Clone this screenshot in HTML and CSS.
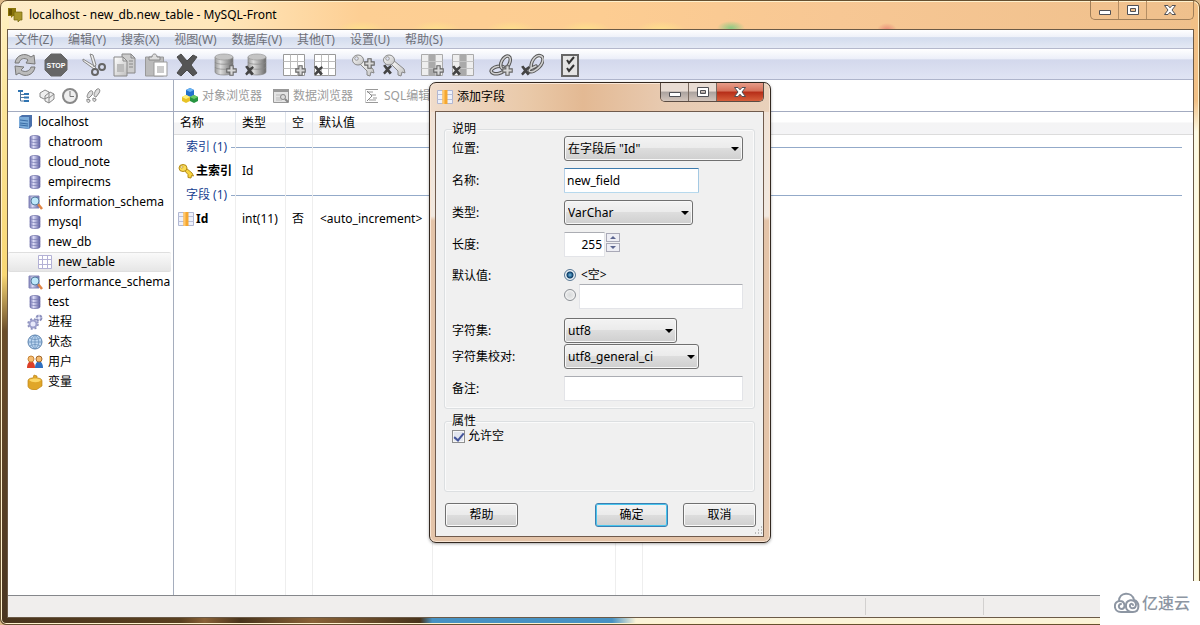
FILE: index.html
```html
<!DOCTYPE html>
<html lang="zh-CN">
<head>
<meta charset="utf-8">
<title>localhost - new_db.new_table - MySQL-Front</title>
<link rel="stylesheet" href="styles.css">
</head>
<body>
<svg class="defs" aria-hidden="true">
  <defs>
    <linearGradient id="metal" x1="0" y1="0" x2="1" y2="0"><stop offset="0" stop-color="#999"/><stop offset=".3" stop-color="#ddd"/><stop offset="1" stop-color="#6a6a6a"/></linearGradient>
    <linearGradient id="blue" x1="0" y1="0" x2="1" y2="0"><stop offset="0" stop-color="#7577b4"/><stop offset=".35" stop-color="#dcdcf6"/><stop offset="1" stop-color="#5d5f9f"/></linearGradient>
    <linearGradient id="paper" x1="0" y1="0" x2="1" y2="1"><stop offset="0" stop-color="#fff"/><stop offset="1" stop-color="#c0c0c0"/></linearGradient>
    <symbol id="plus" viewBox="0 0 10 10"><path d="M3.5 .7h3v2.8h2.8v3H6.500v2.800h-3V6.500H.7v-3h2.800z" fill="#d8d8d8" stroke="#666"/></symbol>
    <symbol id="cross" viewBox="0 0 10 10"><path d="M1 1.500 3 .5l2 2.500L8 1l1 1.500L6.500 5 9 8 7 9.500 5 7 2.500 9.500 1 8l2.500-3z" fill="#444"/></symbol>
    <symbol id="db" viewBox="0 0 24 24"><path d="M2 4v15c0 4 18 4 18 0V4z" fill="url(#metal)" stroke="#888" stroke-width=".7"/><ellipse cx="11" cy="4" rx="9" ry="3" fill="#c4c4c4" stroke="#999" stroke-width=".7"/><path d="M2 9c0 3 18 3 18 0M2 14c0 3 18 3 18 0" fill="none" stroke="#888" stroke-width=".7"/></symbol>
    <symbol id="grid" viewBox="0 0 24 24"><path d="M1.500 1.500h21v21h-21z" fill="#fff" stroke="#999"/><path d="M8.500 1.500v21M15.500 1.500v21M1.500 8.500h21M1.500 15.500h21" stroke="#bbb"/></symbol>
    <symbol id="gridcol" viewBox="0 0 24 24"><path d="M1.500 1.500h21v21h-21z" fill="#eee" stroke="#aaa"/><path d="M8 2h8v20H8z" fill="#aaa"/><path d="M8.500 1.500v21M15.500 1.500v21M1.500 8.500h21M1.500 15.500h21" stroke="#c4c4c4"/></symbol>
    <symbol id="key" viewBox="0 0 24 24"><path d="m8 10 3-3 11 9 1 4-3-1-1 4-3-1v-4z" fill="url(#paper)" stroke="#888"/><ellipse cx="7" cy="7" rx="5.500" ry="5" fill="url(#paper)" stroke="#888"/><circle cx="5.500" cy="5.500" r="1.800" fill="#dfe3f2" stroke="#999"/></symbol>
    <symbol id="link" viewBox="0 0 24 24"><g fill="none"><ellipse cx="9" cy="17" rx="7" ry="3.500" transform="rotate(-12 9 17)" stroke="#555" stroke-width="3.500"/><ellipse cx="9" cy="17" rx="7" ry="3.500" transform="rotate(-12 9 17)" stroke="#d0d0d0" stroke-width="1.500"/><ellipse cx="16.500" cy="9.500" rx="4" ry="7" transform="rotate(28 16.500 9.500)" stroke="#555" stroke-width="3.500"/><ellipse cx="16.500" cy="9.500" rx="4" ry="7" transform="rotate(28 16.500 9.500)" stroke="#d0d0d0" stroke-width="1.500"/></g></symbol>
    <symbol id="unlink" viewBox="0 0 24 24"><g fill="none" stroke-linecap="round"><path d="M11 15C11 6 17 1 21 3s2 10-7 15c-4 2-6 0-4-2l6-3" stroke="#555" stroke-width="3.500"/><path d="M11 15C11 6 17 1 21 3s2 10-7 15c-4 2-6 0-4-2l6-3" stroke="#d0d0d0" stroke-width="1.500"/></g></symbol>
    <symbol id="smalldb" viewBox="0 0 16 16"><path d="M3 3v10c0 2 10 2 10 0V3c0-2-10-2-10 0z" fill="url(#blue)" stroke="#6a6ca6" stroke-width=".7"/><path d="M3 4c0 2 10 2 10 0M3 7c0 2 10 2 10 0M3 10c0 2 10 2 10 0" fill="none" stroke="#777ab2" stroke-width=".7"/></symbol>
    <symbol id="schema" viewBox="0 0 16 16"><path d="M2 2h10v12H2z" fill="url(#blue)" stroke="#8587b8"/><path d="m11 10 4 5" stroke="#e08646" stroke-width="2.500"/><circle cx="8" cy="7" r="4" fill="#bde8fa" stroke="#557b9d"/></symbol>
    <symbol id="fieldicon" viewBox="0 0 16 16"><path d="M.5 1.500h15v13H.5z" fill="#eef1fb" stroke="#b1b7d2"/><path d="M.5 5.500h15M.5 10.500h15" stroke="#b9bfd9"/><path d="M5.500 1h5v14h-5z" fill="#f5a730"/><path d="M5.500 1h2v14h-2z" fill="#ffc76c"/></symbol>
    <symbol id="min" viewBox="0 0 14 12"><path d="M1.500 6.500h11v4h-11z" fill="#fff" stroke="#505055"/></symbol>
    <symbol id="max" viewBox="0 0 14 12"><path fill-rule="evenodd" d="M1.500 1.500h11v9h-11zm3 3v3h5v-3z" fill="#fff" stroke="#505055"/></symbol>
    <symbol id="close" viewBox="0 0 14 12"><path d="M1.500 1.500H5l2 2.300 2-2.300h3.500L9 6l3.500 4.500H9L7 8.200 5 10.500H1.500L5 6z" fill="#fff" stroke="#505055"/></symbol>
  </defs>
</svg>

<div class="window">
  <header class="titlebar">
    <svg class="i16" viewBox="0 0 16 16"><path d="M1 1h8v8H6L4 11V9H1z" fill="#8a7509"/><path d="M7 5h8v8h-2l-2 2v-2H7z" fill="#a8952a" stroke="#74650d" stroke-width=".7"/><path d="M2 2h3v6H2z" fill="#675300"/></svg>
    <h1>localhost - new_db.new_table - MySQL-Front</h1>
    <div class="winbtns">
      <button aria-label="最小化"><svg><use href="#min"/></svg></button><button aria-label="还原"><svg><use href="#max"/></svg></button><button class="x" aria-label="关闭"><svg><use href="#close"/></svg></button>
    </div>
  </header>

  <div class="client">
    <nav class="menu"><button>文件(Z)</button><button>编辑(Y)</button><button>搜索(X)</button><button>视图(W)</button><button>数据库(V)</button><button>其他(T)</button><button>设置(U)</button><button>帮助(S)</button></nav>

    <div class="toolbar">
      <div class="set">
        <button aria-label="刷新"><svg viewBox="0 0 24 24"><path d="M2 10C3 2 12-1 18 4l3-2 1 9-9-1 2-3c-4-3-8-1-9 3zM22 14c-1 8-10 11-16 6l-3 2-1-9 9 1-3 3c4 3 9 1 10-3z" fill="#bbb" stroke="#777"/></svg></button>
        <button aria-label="停止"><svg viewBox="0 0 24 24"><path d="M7 1h10l6 6v10l-6 6H7l-6-6V7z" fill="#666" stroke="#666"/><text x="12" y="15" class="stop">STOP</text></svg></button>
      </div>
      <div class="set">
        <button aria-label="剪切"><svg viewBox="0 0 24 24"><path d="M1 6 14 14l-2 2L1 8zM8 1l4 13 2-2-3-10z" fill="#eee" stroke="#888"/><circle cx="13" cy="19" r="3" fill="none" stroke="#666" stroke-width="2"/><circle cx="20" cy="14" r="3" fill="none" stroke="#666" stroke-width="2"/></svg></button>
        <button aria-label="复制"><svg viewBox="0 0 24 24"><path d="M9 1h9l4 4v15H9z" fill="#ccc" stroke="#888"/><path d="M1 4h9l4 4v15H1z" fill="url(#paper)" stroke="#888"/><path d="M10 4v4h4M18 1v4h4M16 8h4M16 11h4M16 14h4" fill="none" stroke="#888"/><path d="M4 11h7v8H4z" fill="#bbb"/></svg></button>
        <button aria-label="粘贴"><svg viewBox="0 0 24 24"><path d="M1.500 4h18v19h-18z" fill="#bbb" stroke="#999"/><path d="M5 7V4h3c0-4 5-4 5 0h3v3z" fill="#ddd" stroke="#888"/><path d="M10 9h13v14H10z" fill="#fff" stroke="#999"/><path d="M13 13h7v7h-7z" fill="#ccc"/></svg></button>
        <button aria-label="删除"><svg viewBox="0 0 24 24"><path d="m2 4 4-3 6 7 6-6 4 2-6 8 6 8-4 3-6-6-6 6-4-3 6-8z" fill="#555" stroke="#4a4a4a"/></svg></button>
      </div>
      <div class="set">
        <button aria-label="新建数据库"><svg viewBox="0 0 24 24"><use href="#db"/><use href="#plus" x="13" y="12" width="11" height="11"/></svg></button>
        <button aria-label="删除数据库"><svg viewBox="0 0 24 24"><use href="#db" x="2"/><use href="#cross" x="0" y="12" width="11" height="11"/></svg></button>
      </div>
      <div class="set">
        <button aria-label="新建表"><svg viewBox="0 0 24 24"><use href="#grid"/><use href="#plus" x="13" y="12" width="11" height="11"/></svg></button>
        <button aria-label="删除表"><svg viewBox="0 0 24 24"><use href="#grid"/><use href="#cross" x="0" y="12" width="11" height="11"/></svg></button>
      </div>
      <div class="set">
        <button aria-label="新建索引"><svg viewBox="0 0 24 24"><use href="#key"/><use href="#plus" x="13" y="5" width="11" height="11"/></svg></button>
        <button aria-label="删除索引"><svg viewBox="0 0 24 24"><use href="#key"/><use href="#cross" x="0" y="11" width="11" height="11"/></svg></button>
      </div>
      <div class="set">
        <button aria-label="新建字段"><svg viewBox="0 0 24 24"><use href="#gridcol"/><use href="#plus" x="13" y="12" width="11" height="11"/></svg></button>
        <button aria-label="删除字段"><svg viewBox="0 0 24 24"><use href="#gridcol"/><use href="#cross" x="0" y="12" width="11" height="11"/></svg></button>
      </div>
      <div class="set">
        <button aria-label="新建外键"><svg viewBox="0 0 24 24"><use href="#link"/><use href="#plus" x="13" y="12" width="11" height="11"/></svg></button>
        <button aria-label="删除外键"><svg viewBox="0 0 24 24"><use href="#unlink"/><use href="#cross" x="0" y="12" width="11" height="11"/></svg></button>
      </div>
      <div class="set">
        <button aria-label="提交"><svg viewBox="0 0 24 24"><path d="M4 2h16v21H4z" fill="#e4e4e4" stroke="#666" stroke-width="2"/><path d="m9 7 2 3 5-6M9 15l2 3 5-6" fill="none" stroke="#333" stroke-width="2"/></svg></button>
      </div>
    </div>

    <div class="panes">
      <aside class="side">
        <div class="sidebar-tools">
          <button aria-label="导航"><svg class="i16" viewBox="0 0 16 16"><path d="M4.500 4v9M4.500 6.500H8M4.500 9.500H8M4.500 13H8" stroke="#55779b" fill="none"/><path d="M2 2h5v2H2zM8 5h5v2H8zM8 8.500h5v2H8zM8 12h5v2H8z" fill="#2f74b2"/></svg></button>
          <button aria-label="书签"><svg class="i16" viewBox="0 0 16 16"><path d="m1 5 5-3 4 2v5l-5 2-4-2zM6 8l5-4 4 2v5l-5 4-4-2zM10 10v5M10 10l5-4" fill="#eee" stroke="#888"/></svg></button>
          <button aria-label="历史"><svg class="i16" viewBox="0 0 16 16"><circle cx="8" cy="8" r="7" fill="#eee" stroke="#888" stroke-width="2"/><path d="M8 3v5.500h4" fill="none" stroke="#777"/></svg></button>
          <button aria-label="日志"><svg class="i16" viewBox="0 0 16 16"><path d="M4 4c3-3 5 0 3 3l-3 3c-3 0-2-3 0-6zM2 11l3 1c0 4-4 3-3-1zM11 2c3-3 5 0 3 3l-3 4c-3 0-2-4 0-7zM8 10l3 1c0 4-4 3-3-1z" fill="#ddd" stroke="#888"/></svg></button>
        </div>
        <ul class="tree">
          <li class="root"><svg class="i16" viewBox="0 0 16 16"><path d="m2 3 3-2h10v11l-3 3-10-1z" fill="#4a70ab"/><path d="M2 3h10v12L2 13z" fill="#7aaad9"/><path d="m3 6 8 1M3 9l8 1M3 11l8 1" stroke="#396ca5"/></svg>localhost</li>
          <li><svg class="i16"><use href="#smalldb"/></svg>chatroom</li>
          <li><svg class="i16"><use href="#smalldb"/></svg>cloud_note</li>
          <li><svg class="i16"><use href="#smalldb"/></svg>empirecms</li>
          <li><svg class="i16"><use href="#schema"/></svg>information_schema</li>
          <li><svg class="i16"><use href="#smalldb"/></svg>mysql</li>
          <li><svg class="i16"><use href="#smalldb"/></svg>new_db</li>
          <li class="leaf"><svg class="i16" viewBox="0 0 16 16"><path d="M1.500 1.500h13v13h-13zM5.500 2v12M10.500 2v12M2 5.500h12M2 10.500h12" fill="#fff" stroke="#b3b1d5"/></svg>new_table</li>
          <li><svg class="i16"><use href="#schema"/></svg>performance_schema</li>
          <li><svg class="i16"><use href="#smalldb"/></svg>test</li>
          <li><svg class="i16" viewBox="0 0 16 16"><circle cx="6" cy="10" r="3.500" fill="#e7e9fa" stroke="#9c9fcb" stroke-width="2"/><circle cx="6" cy="10" r="5" fill="none" stroke="#8c90bd" stroke-width="1.500" stroke-dasharray="2 2"/><circle cx="12" cy="4" r="2.500" fill="#e7e9fa" stroke="#8c90bd" stroke-width="2" stroke-dasharray="3 1"/></svg>进程</li>
          <li><svg class="i16" viewBox="0 0 16 16"><circle cx="8" cy="8" r="7" fill="#bcd6f0" stroke="#5a80ac"/><path d="M1 8h14M8 1v14M3 4c3 2 7 2 10 0M3 12c3-2 7-2 10 0M8 1C3 5 3 11 8 15M8 1c5 4 5 10 0 14" fill="none" stroke="#6b92bc" stroke-width=".8"/></svg>状态</li>
          <li><svg class="i16" viewBox="0 0 16 16"><path d="M0 14c0-9 8-9 8 0z" fill="#dc3f28"/><path d="M8 14c0-9 8-9 8 0z" fill="#2d6fc0"/><circle cx="4" cy="5" r="3" fill="#f5bd73" stroke="#c78435"/><circle cx="12" cy="5" r="3" fill="#f5bd73" stroke="#a2662a"/></svg>用户</li>
          <li><svg class="i16" viewBox="0 0 16 16"><path d="M1 7c0-3 4-3 5-3l1-3 3 1v2c3 0 5 1 5 3v5l-6 4c-5 0-8-2-8-4z" fill="#e0a628" stroke="#bd8419" stroke-width=".7"/><path d="M2 6c3-2 10-2 12 0-2 3-9 3-12 0z" fill="#fbd766"/></svg>变量</li>
        </ul>
      </aside>

      <main class="main">
        <div class="tabs">
          <button><svg class="i16" viewBox="0 0 16 16"><path d="m4 2 4-2 4 2v5L8 9 4 7z" fill="#2371cc"/><path d="m0 9 4-2 4 2v4l-4 2-4-2z" fill="#e8c326"/><path d="m8 9 4-2 4 2v4l-4 2-4-2z" fill="#269440"/><path d="m4 2 4-2 4 2-4 2z" fill="#6cb5f3"/><path d="m0 9 4-2 4 2-4 2z" fill="#fff17c"/><path d="m8 9 4-2 4 2-4 2z" fill="#69cb65"/></svg>对象浏览器</button>
          <button><svg class="i16" viewBox="0 0 16 16"><path d="M.5 1.500h15v13H.5z" fill="#e4e4e4" stroke="#999"/><path d="M0 1h16v3H0z" fill="#999"/><path d="M3 7h9M3 10h9M3 12h6" stroke="#bbb"/><circle cx="10" cy="9" r="2.500" fill="#ddd" stroke="#888"/><path d="m12 11 3 3" stroke="#888" stroke-width="2"/></svg>数据浏览器</button>
          <button><svg class="i16" viewBox="0 0 16 16"><path d="M2 1.500h12M2 14.500h12M3 4h6M7 7h5M9 10h4M5 12h7" stroke="#999"/><path d="m3 3 5 5-5 5" fill="none" stroke="#888"/><path d="M1.500 1v14" stroke="#ccc"/></svg>SQL编辑器</button>
        </div>
        <table class="list">
          <colgroup><col class="c-name"><col class="c-type"><col class="c-null"><col class="c-default"><col class="c-extra"><col class="c-flag"><col><col class="c-end"></colgroup>
          <thead><tr><th>名称</th><th>类型</th><th>空</th><th>默认值</th><th></th><th></th><th></th><th></th></tr></thead>
          <tbody>
            <tr class="group"><td><span class="group-label">索引 (1)</span></td><td></td><td></td><td></td><td></td><td></td><td></td><td></td></tr>
            <tr><td><b class="name"><svg class="i16" viewBox="0 0 16 16"><path d="m6 7 2-2 6 5 1.500 3-2-.5-.5 2.500-3-.5v-3z" fill="#f8d43e" stroke="#b38a14"/><ellipse cx="5" cy="5" rx="4" ry="3.500" fill="#fbdc55" stroke="#b38a14"/><circle cx="3.800" cy="4" r="1.200" fill="#fff" stroke="#b38a14" stroke-width=".7"/></svg>主索引</b></td><td>Id</td><td></td><td></td><td></td><td></td><td></td><td></td></tr>
            <tr class="group"><td><span class="group-label">字段 (1)</span></td><td></td><td></td><td></td><td></td><td></td><td></td><td></td></tr>
            <tr><td><b class="name"><svg class="i16"><use href="#fieldicon"/></svg>Id</b></td><td>int(11)</td><td>否</td><td>&lt;auto_increment&gt;</td><td></td><td></td><td></td><td></td></tr>
            <tr class="fill"><td></td><td></td><td></td><td></td><td></td><td></td><td></td><td></td></tr>
          </tbody>
        </table>
      </main>
    </div>
    <footer class="status"><span></span><span></span><span></span></footer>
  </div>
</div>

<form class="dialog" role="dialog" aria-labelledby="dlg-title">
  <header class="dlg-title">
    <svg class="i16"><use href="#fieldicon"/></svg><h2 id="dlg-title">添加字段</h2>
    <div class="winbtns solid">
      <button type="button" aria-label="最小化"><svg><use href="#min"/></svg></button><button type="button" aria-label="最大化"><svg><use href="#max"/></svg></button><button type="button" class="x" aria-label="关闭"><svg><use href="#close"/></svg></button>
    </div>
  </header>
  <div class="dlg-body">
    <fieldset>
      <legend>说明</legend>
      <div class="row"><label for="pos">位置:</label><span class="select w-full"><select id="pos"><option>在字段后 "Id"</option></select></span></div>
      <div class="row"><label for="name">名称:</label><input class="w-mid focused" id="name" type="text" value="new_field"></div>
      <div class="row"><label for="type">类型:</label><span class="select w-type"><select id="type"><option>VarChar</option></select></span></div>
      <div class="row"><label for="len">长度:</label><input class="w-num" id="len" type="text" value="255"><span class="spin"><button type="button" aria-label="增加"></button><button type="button" class="down" aria-label="减少"></button></span></div>
      <div class="row default"><span class="caption">默认值:</span>
        <div class="choices w-full">
          <label class="choice"><input type="radio" name="def" checked>&lt;空&gt;</label>
          <div class="choice"><input type="radio" name="def" aria-label="默认值文本"><input type="text" aria-label="默认值"></div>
        </div>
      </div>
      <div class="row"><label for="cs">字符集:</label><span class="select w-cs"><select id="cs"><option>utf8</option></select></span></div>
      <div class="row tight"><label for="co">字符集校对:</label><span class="select w-mid"><select id="co"><option>utf8_general_ci</option></select></span></div>
      <div class="row"><label for="memo">备注:</label><input class="w-full" id="memo" type="text"></div>
    </fieldset>
    <fieldset class="attrs">
      <legend>属性</legend>
      <label class="check"><input type="checkbox" checked>允许空</label>
    </fieldset>
    <div class="actions"><button type="button">帮助</button><button type="submit" class="primary">确定</button><button type="button">取消</button></div>
    <svg class="grip" viewBox="0 0 10 10" aria-hidden="true"><path d="M8 1h1M5 4h1M8 4h1M2 7h1M5 7h1M8 7h1" stroke="#bbb" stroke-width="2"/></svg>
  </div>
</form>

<div class="brand">
  <svg viewBox="0 0 26 22" aria-hidden="true"><g fill="none" stroke="#8d96a3" stroke-width="2" stroke-linecap="round"><path d="M5 9C5 0 18-1 20 8c6 2 6 12-1 12H7C-1 20-1 9 6 9c5 0 6 7 2 8-4 0-4-5-1-5"/><path d="M12 15c-1-8 9-9 10-3 0 6-7 5-6 1 1-2 3-1 3 0M12 15c0 3 3 5 6 5"/></g></svg>
  <span>亿速云</span>
</div>
</body>
</html>
```
FILE: styles.css
```css
* { box-sizing: border-box; }
body {
  margin: 0;
  position: relative;
  background: #dcb988;
  color: #000;
  font: 12px/16px "Noto Sans", "Noto Sans CJK SC", sans-serif;
}
button, input, select { font: inherit; color: inherit; margin: 0; }
button { padding: 0; border: 0; background: none; }
h1, h2 { margin: 0; font: inherit; }
.defs { position: absolute; width: 0; height: 0; }
.i16 { width: 16px; height: 16px; flex: none; }

/* Main window and its glass frame */
.window {
  display: flex;
  flex-direction: column;
  min-height: 100vh;
  padding: 0 5px 6px 6px;
  border: 1px solid #665030;
  border-radius: 7px 7px 6px 6px;
  box-shadow: inset 0 0 0 1px #fff1cd;
  background:
    radial-gradient(closest-side, #8ccb83, transparent) 716px 20px / 28px 14px no-repeat,
    radial-gradient(closest-side, #e98a76, transparent) 876px 22px / 20px 14px no-repeat,
    radial-gradient(closest-side, #ffe08c, transparent) 335px 20px / 50px 18px no-repeat,
    radial-gradient(closest-side, #ffe08c, transparent) 410px 20px / 50px 18px no-repeat,
    radial-gradient(closest-side, #ffe08c, transparent) 485px 20px / 50px 18px no-repeat,
    radial-gradient(closest-side, #ffe08c, transparent) 560px 20px / 50px 18px no-repeat,
    radial-gradient(closest-side, #ffe08c, transparent) 635px 20px / 50px 18px no-repeat,
    linear-gradient(90deg, #4a351e 0, #5a4020 15%, #8a6238 17%, #49341c 20%, #8a6238 26%, #49341c 35%, #4791c2 36%, #4791c2 51%, #fbf3d8 53%) bottom / 100% 8px no-repeat,
    linear-gradient(180deg, #fff1c5 0, #fbe59a 16%, #f8d774 44%, #6a4d2a 53%, #493521 100%) left / 8px 100% no-repeat,
    linear-gradient(180deg, #f1c086 0, #f1c086 16%, #fcfae4 21%, #fcf9e0 100%) right / 8px 100% no-repeat,
    linear-gradient(90deg, #fdebc8 0, #ffe7bb 18%, #fdcf94 30%, #fdcd92 50%, #f7c794 70%, #efc08c 100%);
}
.titlebar { display: flex; align-items: center; height: 28px; gap: 6px; }
.titlebar h1 { flex: 1; }
.winbtns { display: flex; align-self: flex-start; height: 19px; border: 1px solid #a17f59; border-top: 0; border-radius: 0 0 5px 5px; overflow: hidden; }
.winbtns button { width: 28px; display: flex; align-items: center; justify-content: center; border-right: 1px solid #b48e64; }
.winbtns .x { width: 46px; border-right: 0; }
.winbtns svg { width: 14px; height: 12px; }
.client { flex: 1; display: flex; flex-direction: column; border: 1px solid #6b5a47; background: #fff; }

.menu { display: flex; gap: 15px; height: 19px; padding: 2px 7px 0; border-bottom: 1px solid #b5b9cc; background: linear-gradient(#fff 0, #eef1f9 40%, #d3dcee 42%, #e4e9f4 100%); }
.menu button { color: #6e7078; }
.toolbar { display: flex; gap: 14px; height: 31px; padding: 4px 5px 2px; border-bottom: 1px solid #aeb4cb; background: linear-gradient(#fff 0, #eceff9 33%, #d3d8ec 36%, #e0e4f4 100%); }
.set { display: flex; gap: 7px; }
.set button, .set svg { width: 24px; height: 24px; display: block; }
.stop { font: bold 7px "Liberation Sans", sans-serif; fill: #fff; text-anchor: middle; }

.panes { flex: 1; display: flex; }
.side { width: 166px; display: flex; flex-direction: column; border-right: 1px solid #a5adbd; }
.sidebar-tools { height: 32px; display: flex; align-items: center; gap: 7px; padding: 0 8px; border-bottom: 1px solid #a3abc0; margin-right: -1px; }
.sidebar-tools svg { display: block; }
.tree { list-style: none; margin: 0; padding: 0 2px 0 0; }
.tree li { display: flex; align-items: center; gap: 5px; height: 20px; padding-left: 19px; overflow: hidden; white-space: nowrap; }
.tree .root { padding-left: 9px; }
.tree .leaf { padding-left: 29px; background: linear-gradient(#fafafa, #e6e6e6); border: 1px solid #dfdfdf; border-width: 1px 0; border-radius: 2px; }

.main { flex: 1; min-width: 0; display: flex; flex-direction: column; }
.tabs { height: 32px; display: flex; align-items: center; gap: 11px; padding: 0 8px; border-bottom: 1px solid #a3abc0; }
.tabs button { display: flex; align-items: center; gap: 4px; color: #9b9b9b; }
.list { flex: 1; width: 100%; display: table; table-layout: fixed; border-collapse: separate; border-spacing: 0; height: 100%; }
.c-name { width: 62px; } .c-type { width: 50px; } .c-null { width: 27px; } .c-default { width: 120px; }
.c-extra { width: 183px; } .c-flag { width: 27px; } .c-end { width: 11px; }
.list th { height: 23px; padding: 0 6px; font-weight: normal; text-align: left; background: linear-gradient(#fff 45%, #f4f4f5 50%, #f4f4f6); border-right: 1px solid #e0e4ea; border-bottom: 1px solid #dcdcdc; }
.list td { height: 24px; padding: 0 6px; border-right: 1px solid #eee; white-space: nowrap; }
.list td:nth-child(4) { padding-left: 7px; }
.list th:nth-child(n+7), .list td:nth-child(n+7) { border-right: 0; }
.list td:first-child { padding: 0 0 0 4px; }
.list .group td { background: linear-gradient(#93aac9, #93aac9) center / 100% 1px no-repeat; }
.list .group td:first-child, .list .group td:last-child { background: none; }
.group-label { display: flex; align-items: center; gap: 4px; padding-left: 8px; color: #173f91; }
.group-label::after { content: ""; flex: 1; height: 1px; background: #93aac9; }
.list .fill td { height: auto; }
.name { display: flex; align-items: center; gap: 2px; }
.status { height: 22px; display: flex; padding: 2px 0; background: #f0eeed; border-top: 1px solid #85878b; }
.status span { flex: 1; border-right: 1px solid #d2d0cf; }
.status span:nth-child(2) { flex: 0 0 118px; }
.status span:nth-child(3) { flex: 0 0 209px; border: 0; }

/* Field dialog floating over the main window */
.dialog {
  position: absolute;
  top: 82px;
  left: 50%;
  transform: translateX(-50%);
  width: 342px;
  padding: 0 6px 5px 5px;
  border: 1px solid #332820;
  border-radius: 7px;
  box-shadow: inset 0 0 0 1px #f9e6d5, 0 1px 3px rgba(0, 0, 0, .35);
  background: linear-gradient(90deg, #f0dccb 0, #e9c8a7 30%, #e3b993 45%, #e8cbb2 70%, #e9d1bb 100%) top / 100% 29px no-repeat, linear-gradient(#f0e1d4 0, #f1e8df 29%, #e4c4a9 30%, #e4c4a9 100%);
}
.dlg-title { display: flex; align-items: center; gap: 4px; height: 28px; padding-left: 2px; }
.dlg-title h2 { flex: 1; }
.winbtns.solid { border-color: #5b4c43; }
.solid button { background: linear-gradient(#e8dcd3 45%, #aaa29e 50%, #d3c5bc); border-color: #77685e; }
.solid .x { background: linear-gradient(#e79d89 0, #d57059 45%, #b62d18 50%, #d65f3b 100%); }
.dlg-body { position: relative; padding: 10px 8px 9px; border: 1px solid #705b4d; background: #f0f0f0; }
fieldset { margin: 0; padding: 0 10px 7px 7px; border: 1px solid #dcdfe1; border-radius: 3px; box-shadow: inset 0 0 0 1px #fafafa; min-width: 0; }
legend { padding: 0; line-height: 14px; }
.row { display: flex; align-items: center; height: 25px; margin-bottom: 7px; }
.row:last-child { margin-bottom: 0; }
.row > label, .caption { width: 112px; flex: none; }
.w-full { width: 179px; } .w-mid { width: 135px; } .w-type { width: 129px; } .w-cs { width: 113px; } .w-num { width: 41px; text-align: right; }
.select { position: relative; display: block; height: 25px; }
.select::after { content: ""; position: absolute; right: 4px; top: 11px; border: 4px solid transparent; border-top-color: #000; border-bottom: 0; pointer-events: none; }
select { appearance: none; width: 100%; height: 25px; padding: 0 16px 0 3px; border: 1px solid #707070; border-radius: 3px; background: linear-gradient(#f3f3f3 0, #ebebeb 48%, #dddddd 50%, #cfcfcf 100%); box-shadow: inset 0 0 0 1px #f8f8f8; }
input[type="text"] { height: 25px; padding: 0 2px; border: 1px solid #e3e4e8; border-top-color: #abadb3; border-radius: 1px; background: #fff; }
input.focused { border-color: #3d7bad #a4c9e3 #b7d9ed #b5cfe7; }
.spin { display: flex; flex-direction: column; gap: 1px; margin-left: 1px; align-self: flex-start; padding-top: 1px; }
.spin button { width: 14px; height: 9px; display: flex; align-items: center; justify-content: center; border: 1px solid #a9a9b7; background: #eeeef4; }
.spin button::before { content: ""; border: 3px solid transparent; border-bottom-color: #5d6690; border-top: 0; }
.spin .down::before { border: 3px solid transparent; border-top-color: #5d6690; border-bottom: 0; }
.default { height: auto; align-items: flex-start; padding-top: 2px; margin-bottom: 9px; }
.caption { line-height: 20px; }
.choice { display: flex; gap: 5px; align-items: center; height: 18px; }
div.choice { align-items: flex-start; height: 25px; gap: 3px; }
.choice input[type="text"] { flex: 1; min-width: 0; }
input[type="radio"] { appearance: none; flex: none; width: 12px; height: 12px; border: 1px solid #8a8f94; border-radius: 50%; background: radial-gradient(#d8dadb, #f5f5f5); box-shadow: inset 0 0 0 1px #f4f4f4; }
div.choice input[type="radio"] { margin-top: 5px; }
input[type="radio"]:checked { background: radial-gradient(circle, #6ebbe4 0, #0d3c66 3px, #d4e4ee 4px); border-color: #587895; }
.tight { margin-top: -6px; }
.attrs { margin-top: 5px; height: 78px; }
.check { display: flex; align-items: center; gap: 3px; height: 16px; }
.check input { appearance: none; width: 13px; height: 13px; border: 1px solid #8e8f8f; background: #e2e6ef; box-shadow: inset 0 0 0 1px #f7f7f7; display: grid; place-items: center; }
.check input::before { content: ""; width: 4px; height: 8px; border: solid #43549a; border-width: 0 2px 2px 0; transform: rotate(40deg); }
.actions { display: flex; gap: 15px; margin-top: 11px; padding-left: 1px; margin-right: -1px; }
.actions button { width: 73px; height: 24px; border: 1px solid #707070; border-radius: 3px; background: linear-gradient(#f3f3f3 0, #ebebeb 48%, #dddddd 50%, #cfcfcf 100%); box-shadow: inset 0 0 0 1px #fafafa; }
.actions button:first-child { margin-right: auto; }
.actions .primary { border-color: #3c7fb1; box-shadow: inset 0 0 0 1px #48c5ee; }
.grip { position: absolute; right: 0; bottom: 0; width: 10px; height: 10px; }

/* Corner mark */
.brand { position: absolute; right: 0; bottom: 0; width: 100px; height: 44px; display: flex; align-items: center; gap: 2px; padding-left: 14px; background: #fff; color: #8d96a3; font-size: 16px; font-weight: 500; white-space: nowrap; }
.brand svg { width: 26px; height: 22px; flex: none; }
```
